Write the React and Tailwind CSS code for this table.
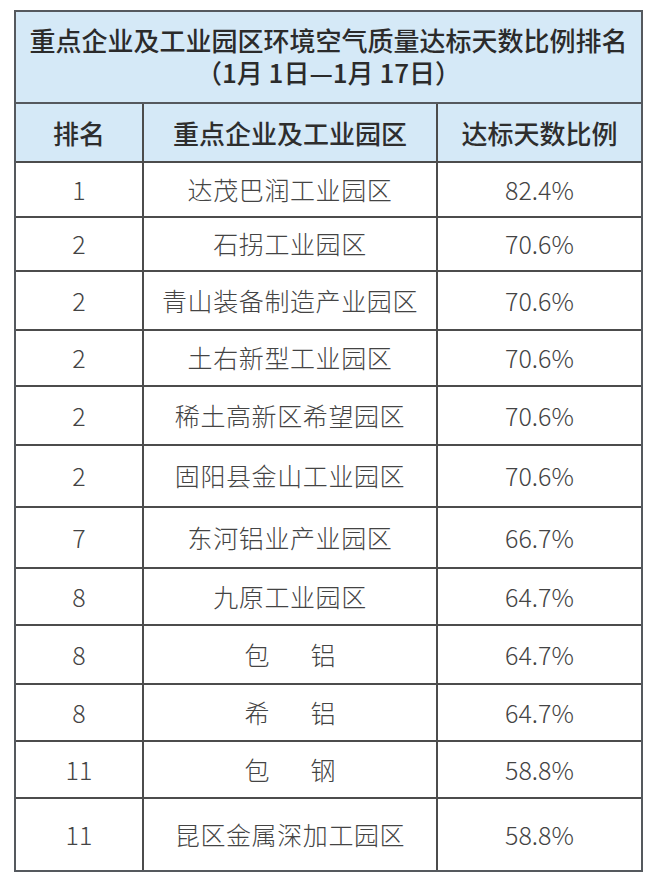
import React from 'react'

// Ranking rows; h = row height in px including its bottom rule.
const ROWS = [
  { rank: '1', name: '达茂巴润工业园区', pct: '82.4%', h: 55 },
  { rank: '2', name: '石拐工业园区', pct: '70.6%', h: 54 },
  { rank: '2', name: '青山装备制造产业园区', pct: '70.6%', h: 59 },
  { rank: '2', name: '土右新型工业园区', pct: '70.6%', h: 56 },
  { rank: '2', name: '稀土高新区希望园区', pct: '70.6%', h: 59 },
  { rank: '2', name: '固阳县金山工业园区', pct: '70.6%', h: 62 },
  { rank: '7', name: '东河铝业产业园区', pct: '66.7%', h: 61 },
  { rank: '8', name: '九原工业园区', pct: '64.7%', h: 57 },
  { rank: '8', name: ['包', '铝'], pct: '64.7%', h: 59 },
  { rank: '8', name: ['希', '铝'], pct: '64.7%', h: 57 },
  { rank: '11', name: ['包', '钢'], pct: '58.8%', h: 57 },
  { rank: '11', name: '昆区金属深加工园区', pct: '58.8%', h: 71 },
]

const FONT = { fontFamily: '"Noto Sans CJK SC", "Noto Sans", sans-serif' }

function Name({ value }) {
  if (Array.isArray(value)) {
    return (
      <span className="flex items-center">
        <span>{value[0]}</span>
        <span className="w-[41px]" />
        <span>{value[1]}</span>
      </span>
    )
  }
  return <span className="tracking-[0.6px]">{value}</span>
}

export default function App() {
  return (
    <div className="w-[654px] h-[885px] bg-white pt-[10px] pl-[14px]" style={FONT}>
      <div className="w-[629px] border-2 border-[#55595e]">
        <div className="h-[92px] bg-[#d5e9f7] border-b-2 border-[#55595e] flex flex-col items-center justify-center text-[26px] leading-[32px] font-medium text-[#2b2b2b] pb-[2px]">
          <div>重点企业及工业园区环境空气质量达标天数比例排名</div>
          <div>（1月 1日—1月 17日）</div>
        </div>

        <div className="h-[59px] bg-[#d5e9f7] border-b-2 border-[#4c4c4c] grid grid-cols-[128px_294px_203px] text-[26px] font-medium text-[#2e2e2e]">
          <div className="flex items-center justify-center border-r-2 border-[#4c4c4c]">排名</div>
          <div className="flex items-center justify-center border-r-2 border-[#4c4c4c]">重点企业及工业园区</div>
          <div className="flex items-center justify-center">达标天数比例</div>
        </div>

        {ROWS.map((r, i) => (
          <div
            key={i}
            className={`grid grid-cols-[128px_294px_203px] text-[25px] font-light text-[#444444] ${
              i < ROWS.length - 1 ? 'border-b-2 border-[#4c4c4c]' : ''
            }`}
            style={{ height: r.h }}
          >
            <div className="flex items-center justify-center border-r-2 border-[#4c4c4c]">{r.rank}</div>
            <div className="flex items-center justify-center border-r-2 border-[#4c4c4c]">
              <Name value={r.name} />
            </div>
            <div className="flex items-center justify-center">{r.pct}</div>
          </div>
        ))}
      </div>
    </div>
  )
}
